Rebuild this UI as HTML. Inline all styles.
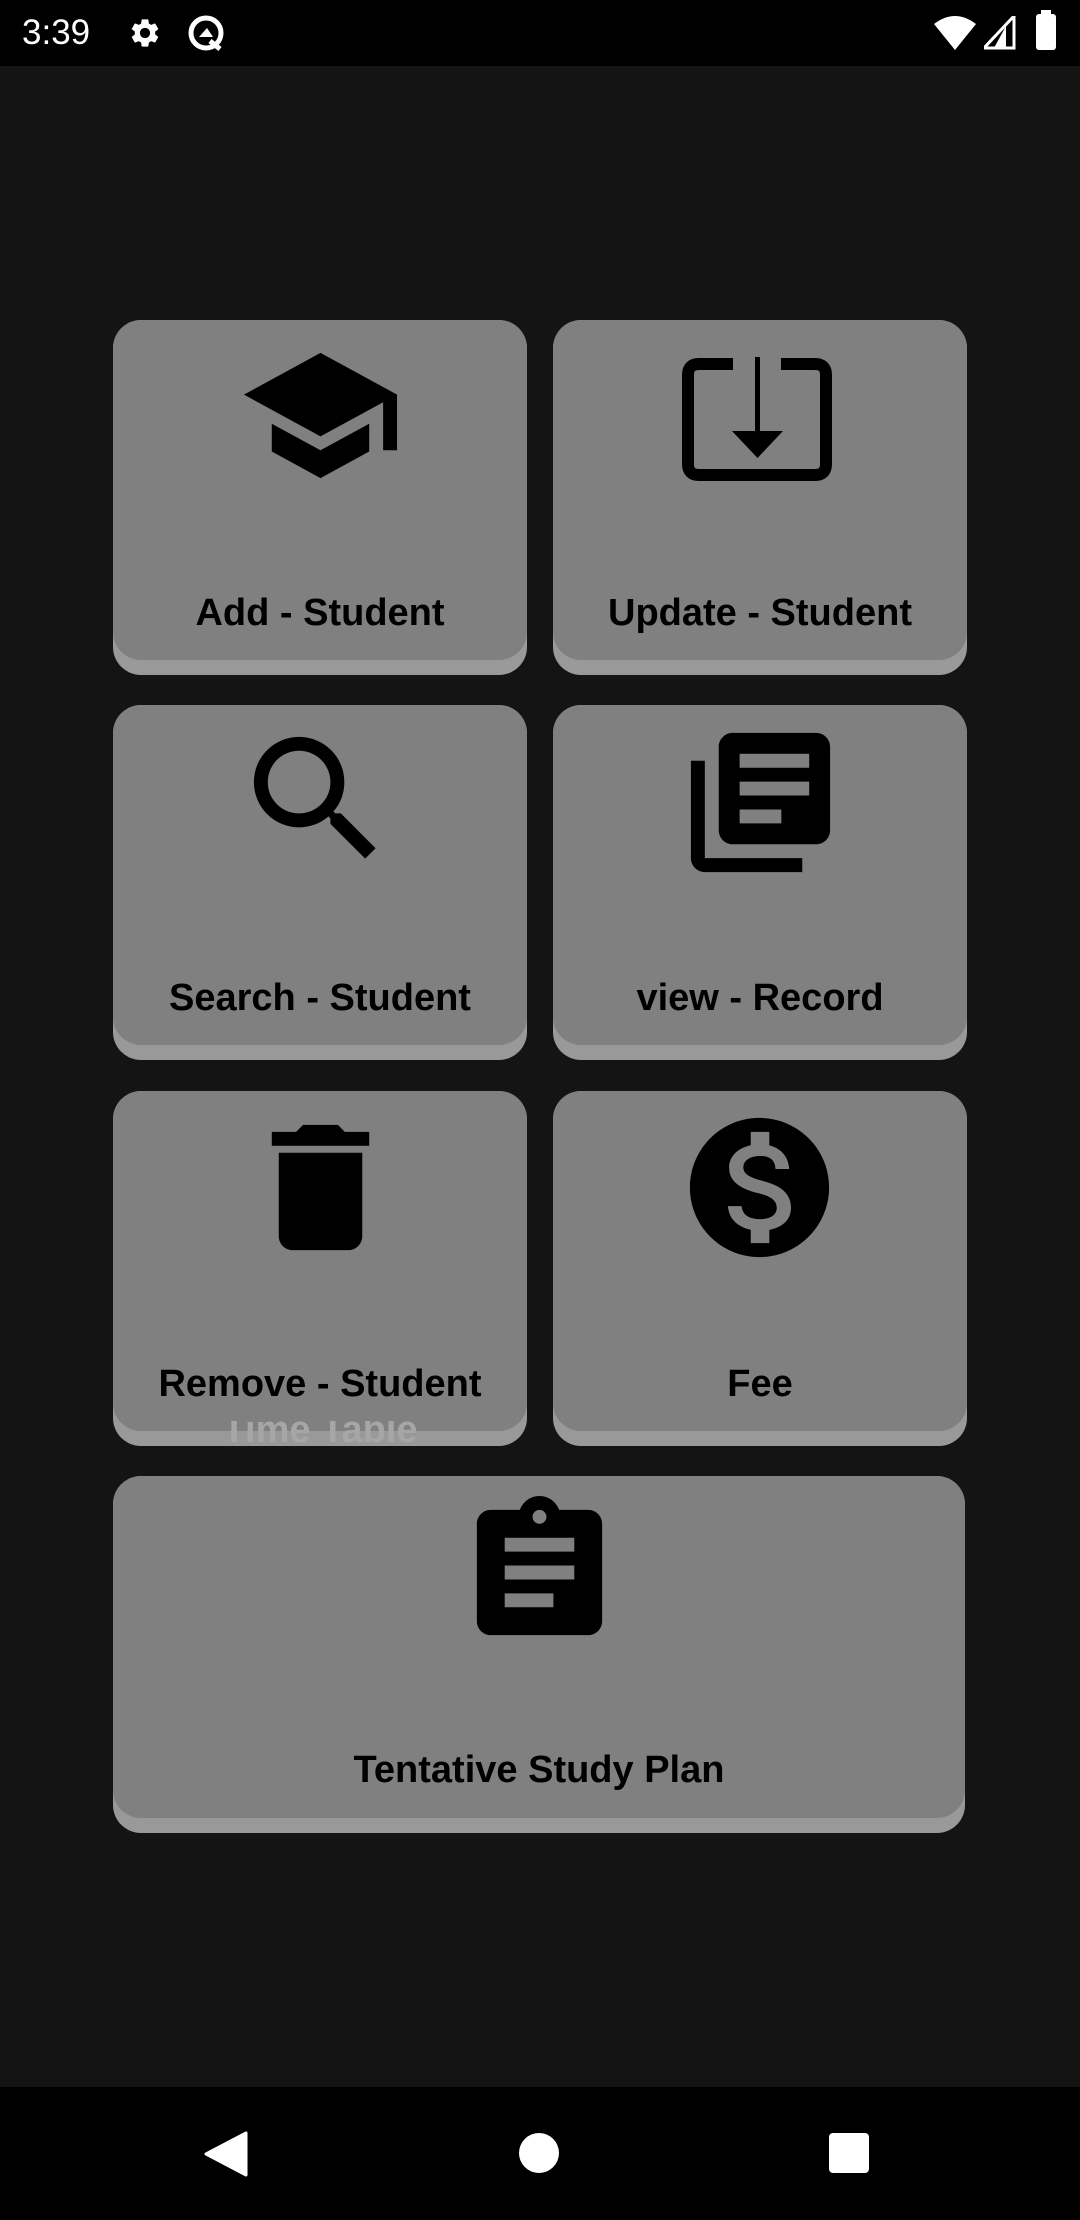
<!DOCTYPE html>
<html><head><style>
body{margin:0;width:1080px;height:2220px;background:#141414;position:relative;overflow:hidden;font-family:"Liberation Sans",Roboto,sans-serif}
.sb{position:absolute;left:0;top:0;width:1080px;height:66px;background:#000}
.nav{position:absolute;left:0;top:2087px;width:1080px;height:133px;background:#000}
.card{position:absolute;width:414px;height:355px;border-radius:28px;background:#999;overflow:hidden}
.face{position:absolute;left:0;top:0;right:0;height:340px;border-radius:28px;background:#808080}
.lbl{position:absolute;left:0;right:0;text-align:center;font-weight:bold;font-size:38px;color:#000}
svg.ic{position:absolute}
</style></head><body>
<div class="sb">
<div style="position:absolute;left:22px;top:13px;color:#fff;font-size:35px">3:39</div>
<svg style="position:absolute;left:128px;top:16px" width="34" height="34" viewBox="0 0 24 24"><path fill="#fff" d="M19.14 12.94c.04-.3.06-.61.06-.94 0-.32-.02-.64-.07-.94l2.030-1.58a.49.49 0 00.12-.61l-1.92-3.32a.488.488 0 00-.59-.22l-2.39.96c-.5-.38-1.030-.7-1.62-.94l-.36-2.54a.484.484 0 00-.48-.41h-3.84c-.24 0-.43.17-.47.41l-.36 2.54c-.59.24-1.130.57-1.62.94l-2.39-.96c-.22-.08-.47 0-.59.22L2.74 8.87c-.12.21-.08.47.12.61l2.030 1.58c-.05.3-.09.63-.09.94s.02.64.07.94l-2.030 1.58a.49.49 0 00-.12.61l1.92 3.32c.12.22.37.29.59.22l2.39-.96c.5.38 1.030.7 1.62.94l.36 2.54c.05.24.24.41.48.41h3.84c.24 0 .44-.17.47-.41l.36-2.54c.59-.24 1.130-.56 1.62-.94l2.39.96c.22.08.47 0 .59-.22l1.92-3.32c.12-.22.07-.47-.12-.61l-2.010-1.58zM12 15.6c-1.98 0-3.6-1.62-3.6-3.6s1.62-3.6 3.6-3.6 3.6 1.62 3.6 3.6-1.62 3.6-3.6 3.6z"/></svg>
<svg style="position:absolute;left:186px;top:13px" width="40" height="40" viewBox="0 0 40 40"><circle cx="20" cy="20" r="15" fill="none" stroke="#fff" stroke-width="5"/><path d="M13 24l8-9 6 9z" fill="#fff"/><path d="M24 28l10 8" stroke="#fff" stroke-width="5"/></svg>
<svg style="position:absolute;left:934px;top:14px" width="42" height="38" viewBox="0 0 42 38"><path d="M0 10Q21-6 42 10L21 36z" fill="#fff"/></svg>
<svg style="position:absolute;left:984px;top:16px" width="32" height="34" viewBox="0 0 32 34"><path d="M30 0V32H0z" fill="none" stroke="#fff" stroke-width="3"/><path d="M22 10V32H10z" fill="#fff"/></svg>
<div style="position:absolute;left:1036px;top:14px;width:20px;height:36px;background:#fff;border-radius:3px"></div>
<div style="position:absolute;left:1041px;top:10px;width:10px;height:6px;background:#fff"></div>
</div>

<div class="card" style="left:113px;top:320px"><div class="face"></div><div class="lbl" style="top:272px">Add - Student</div>
<svg class="ic" style="left:124px;top:12px" width="167" height="167" viewBox="0 0 24 24"><path d="M5 13.18v4L12 21l7-3.82v-4L12 17l-7-3.82zM12 3L1 9l11 6 9-4.91V17h2V9L12 3z"/></svg></div>
<div class="card" style="left:553px;top:320px"><div class="face"></div><div class="lbl" style="top:272px">Update - Student</div>
<svg class="ic" style="left:128px;top:37px" width="160" height="126" viewBox="0 0 160 126"><path d="M52 7H18Q7 7 7 18V107Q7 118 18 118H134Q145 118 145 107V18Q145 7 134 7H100" fill="none" stroke="#000" stroke-width="12"/><path d="M74 0H79V76H74z"/><path d="M51 74H102L76.5 101z"/></svg></div>

<div class="card" style="left:113px;top:705px"><div class="face"></div><div class="lbl" style="top:272px">Search - Student</div>
<svg class="ic" style="left:120px;top:11px" width="167" height="167" viewBox="0 0 24 24"><path d="M15.5 14h-.79l-.28-.27A6.471 6.471 0 0016 9.5 6.5 6.5 0 109.5 16c1.61 0 3.090-.59 4.23-1.57l.27.28v.79l5 4.99L20.49 19l-4.99-5zm-6 0C7.010 14 5 11.99 5 9.5S7.010 5 9.5 5 14 7.010 14 9.5 11.99 14 9.5 14z"/></svg></div>
<div class="card" style="left:553px;top:705px"><div class="face"></div><div class="lbl" style="top:272px">view - Record</div>
<svg class="ic" style="left:124px;top:14px" width="167" height="167" viewBox="0 0 24 24"><path d="M4 6H2v14c0 1.1.9 2 2 2h14v-2H4V6zm16-4H8c-1.1 0-2 .9-2 2v12c0 1.1.9 2 2 2h12c1.1 0 2-.9 2-2V4c0-1.1-.9-2-2-2zm-1 9H9V9h10v2zm-4 4H9v-2h6v2zm4-8H9V5h10v2z"/></svg></div>

<div class="card" style="left:113px;top:1091px"><div class="face"></div><div class="lbl" style="top:272px">Remove - Student</div>
<div style="position:absolute;left:0;right:0;top:330px;height:25px;overflow:hidden"><div style="text-align:center;font-weight:bold;font-size:38px;color:#a6a6a6;margin-top:-12px">Time Table</div></div>
<svg class="ic" style="left:124px;top:13px" width="167" height="167" viewBox="0 0 24 24"><path d="M6 19c0 1.1.9 2 2 2h8c1.1 0 2-.9 2-2V7H6v12zM19 4h-3.5l-1-1h-5l-1 1H5v2h14V4z"/></svg></div>
<div class="card" style="left:553px;top:1091px"><div class="face"></div><div class="lbl" style="top:272px">Fee</div>
<svg class="ic" style="left:123px;top:13px" width="167" height="167" viewBox="0 0 24 24"><path d="M12 2C6.48 2 2 6.48 2 12s4.48 10 10 10 10-4.48 10-10S17.52 2 12 2zm1.41 16.090V20h-2.67v-1.93c-1.71-.36-3.16-1.46-3.27-3.4h1.96c.1 1.050.82 1.87 2.65 1.87 1.96 0 2.4-.98 2.4-1.59 0-.83-.44-1.61-2.67-2.14-2.48-.6-4.18-1.62-4.18-3.67 0-1.72 1.39-2.84 3.110-3.21V4h2.67v1.95c1.86.45 2.79 1.86 2.85 3.39H14.3c-.05-1.11-.64-1.87-2.22-1.87-1.5 0-2.4.68-2.4 1.64 0 .84.65 1.39 2.67 1.91s4.18 1.39 4.18 3.91c-.01 1.83-1.38 2.83-3.12 3.16z"/></svg></div>

<div class="card" style="left:113px;top:1476px;width:852px;height:357px"><div class="face" style="height:342px"></div><div class="lbl" style="top:273px">Tentative Study Plan</div>
<svg class="ic" style="left:343px;top:13px" width="167" height="167" viewBox="0 0 24 24"><path d="M19 3h-4.18C14.4 1.84 13.3 1 12 1c-1.3 0-2.4.84-2.82 2H5c-1.1 0-2 .9-2 2v14c0 1.1.9 2 2 2h14c1.1 0 2-.9 2-2V5c0-1.1-.9-2-2-2zm-7 0c.55 0 1 .45 1 1s-.45 1-1 1-1-.45-1-1 .45-1 1-1zm2 14H7v-2h7v2zm3-4H7v-2h10v2zm0-4H7V7h10v2z"/></svg></div>

<div class="nav">
<svg style="position:absolute;left:204px;top:44px" width="44" height="46" viewBox="0 0 44 46"><path d="M42 2V44L2 23z" fill="#fff" stroke="#fff" stroke-width="3" stroke-linejoin="round"/></svg>
<div style="position:absolute;left:519px;top:46px;width:40px;height:40px;border-radius:50%;background:#fff"></div>
<div style="position:absolute;left:829px;top:46px;width:40px;height:40px;border-radius:4px;background:#fff"></div>
</div>
</body></html>
